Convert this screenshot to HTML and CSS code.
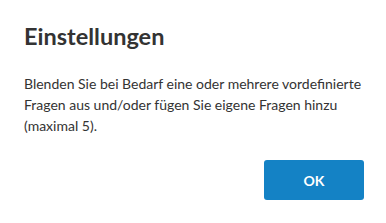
FILE: index.html
```html
<!DOCTYPE html>
<html>
<head>
    <title>Einstellungen</title>
    <link rel="stylesheet" href="styles.css">
</head>
<body>
<div class="dialog">
    <h2 class="dialog-title">Einstellungen</h2>
    <p class="dialog-text">Blenden Sie bei Bedarf eine oder mehrere vordefinierte Fragen aus und/oder fügen Sie eigene Fragen hinzu (maximal 5).</p>
    <div class="dialog-actions">
        <button class="btn-primary">OK</button>
    </div>
</div>
</body>
</html>
```

FILE: styles.css
```css
body {
    margin: 0;
    font-family: Lato, "Open Sans", sans-serif;
    background-color: #fff;
    color: #333;
}

.dialog {
    padding: 22px 22px 23px 24px;
}

.dialog-title {
    margin: 0;
    font-size: 23.5px;
    line-height: 28px;
    font-weight: bold;
    color: #333;
}

.dialog-text {
    margin: 23px 0 0 0;
    font-size: 14px;
    line-height: 21px;
}

.dialog-actions {
    display: flex;
    justify-content: flex-end;
    margin-top: 24px;
}

.btn-primary {
    width: 100px;
    height: 40px;
    background-color: #1482c5;
    color: #fff;
    border: none;
    border-radius: 3px;
    font-family: Lato, sans-serif;
    font-size: 14px;
    font-weight: bold;
    cursor: pointer;
}
```
